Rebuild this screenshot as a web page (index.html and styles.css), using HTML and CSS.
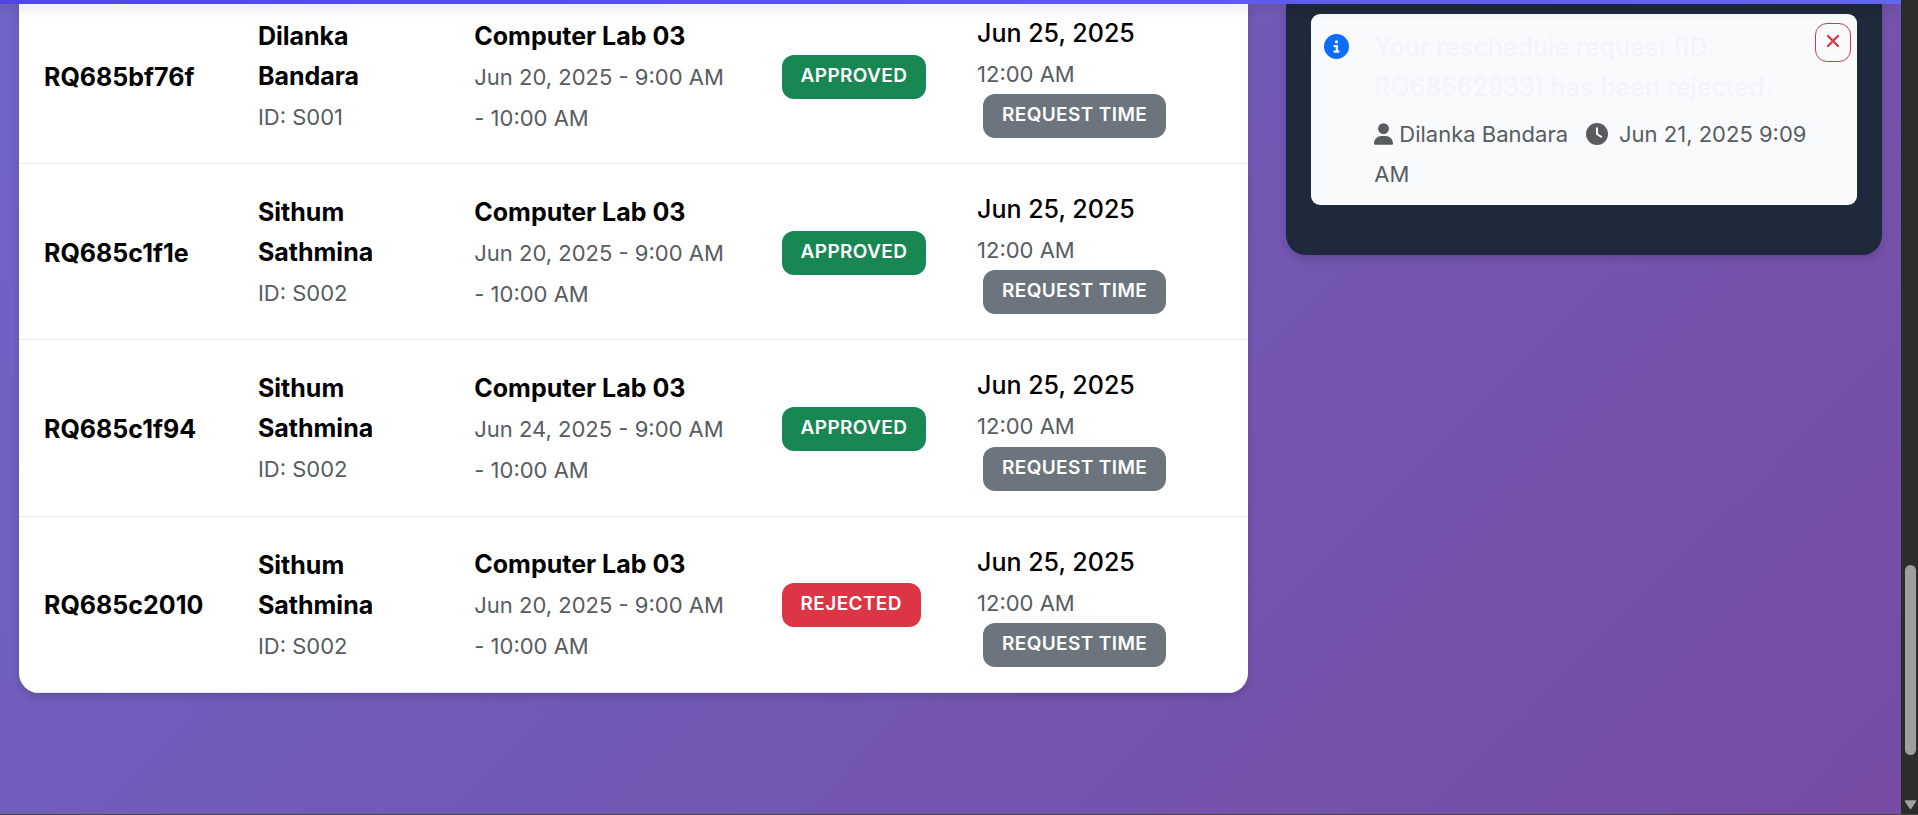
FILE: index.html
```
<!DOCTYPE html>
<html lang="en">
<head>
<meta charset="utf-8">
<meta name="viewport" content="width=device-width, initial-scale=1">
<title>Reschedule Requests</title>
<link rel="stylesheet" href="styles.css">
</head>
<body>
<div class="window">
  <div class="page">
    <header class="topbar"></header>
    <main class="columns">
      <section class="column">
        <div class="table-card">
          <table class="requests">
            <colgroup>
              <col class="col-id"><col class="col-person"><col class="col-lab"><col class="col-status"><col class="col-date">
            </colgroup>
            <tbody>
              <tr>
                <td><strong>RQ685bf76f</strong></td>
                <td><strong>Dilanka Bandara</strong><br><small>ID: S001</small></td>
                <td><strong>Computer Lab 03</strong><br><small>Jun 20, 2025 - 9:00 AM - 10:00 AM</small></td>
                <td><span class="badge approved">Approved</span></td>
                <td><span class="date">Jun 25, 2025</span><br><small>12:00 AM</small> <span class="badge neutral">Request Time</span></td>
              </tr>
              <tr>
                <td><strong>RQ685c1f1e</strong></td>
                <td><strong>Sithum Sathmina</strong><br><small>ID: S002</small></td>
                <td><strong>Computer Lab 03</strong><br><small>Jun 20, 2025 - 9:00 AM - 10:00 AM</small></td>
                <td><span class="badge approved">Approved</span></td>
                <td><span class="date">Jun 25, 2025</span><br><small>12:00 AM</small> <span class="badge neutral">Request Time</span></td>
              </tr>
              <tr>
                <td><strong>RQ685c1f94</strong></td>
                <td><strong>Sithum Sathmina</strong><br><small>ID: S002</small></td>
                <td><strong>Computer Lab 03</strong><br><small>Jun 24, 2025 - 9:00 AM - 10:00 AM</small></td>
                <td><span class="badge approved">Approved</span></td>
                <td><span class="date">Jun 25, 2025</span><br><small>12:00 AM</small> <span class="badge neutral">Request Time</span></td>
              </tr>
              <tr>
                <td><strong>RQ685c2010</strong></td>
                <td><strong>Sithum Sathmina</strong><br><small>ID: S002</small></td>
                <td><strong>Computer Lab 03</strong><br><small>Jun 20, 2025 - 9:00 AM - 10:00 AM</small></td>
                <td><span class="badge rejected">Rejected</span></td>
                <td><span class="date">Jun 25, 2025</span><br><small>12:00 AM</small> <span class="badge neutral">Request Time</span></td>
              </tr>
            </tbody>
          </table>
        </div>
      </section>
      <aside class="column">
        <div class="panel">
          <article class="notice">
            <svg class="notice-icon" viewBox="0 0 512 512" aria-hidden="true"><path fill="currentColor" d="M256 512A256 256 0 1 0 256 0a256 256 0 1 0 0 512zM216 336h24V272H216c-13.300 0-24-10.700-24-24s10.700-24 24-24h48c13.300 0 24 10.700 24 24v88h8c13.300 0 24 10.700 24 24s-10.700 24-24 24H216c-13.300 0-24-10.700-24-24s10.700-24 24-24zm40-208a32 32 0 1 1 0 64 32 32 0 1 1 0-64z"/></svg>
            <div class="notice-body">
              <p class="notice-text">Your reschedule request (ID: RQ68562933) has been rejected.</p>
              <p class="notice-meta"><svg class="user-icon" viewBox="0 0 448 512" aria-hidden="true"><path fill="currentColor" d="M224 256A128 128 0 1 0 224 0a128 128 0 1 0 0 256zm-45.700 48C79.800 304 0 383.800 0 482.300C0 498.700 13.300 512 29.700 512H418.300c16.400 0 29.700-13.300 29.700-29.700C448 383.800 368.200 304 269.700 304H178.300z"/></svg>Dilanka Bandara<svg class="clock-icon" viewBox="0 0 512 512" aria-hidden="true"><path fill="currentColor" d="M256 0a256 256 0 1 1 0 512A256 256 0 1 1 256 0zM232 120V256c0 8 4 15.500 10.700 20l96 64c11 7.400 25.900 4.400 33.300-6.700s4.400-25.900-6.700-33.300L280 243.200V120c0-13.300-10.700-24-24-24s-24 10.700-24 24z"/></svg>Jun 21, 2025 9:09 AM</p>
            </div>
            <button class="dismiss" type="button" aria-label="Dismiss notification"><svg class="dismiss-icon" viewBox="0 0 14 14" aria-hidden="true"><path d="M2 2l10 10M12 2L2 12" fill="none" stroke="currentColor" stroke-width="2.300" stroke-linecap="round"/></svg></button>
          </article>
        </div>
      </aside>
    </main>
  </div>
  <div class="scrollbar" aria-hidden="true">
    <div class="thumb"></div>
    <svg class="scroll-arrow" viewBox="0 0 13 10"><path d="M1.500 1h10L6.500 8.500z" fill="#9f9f9f" stroke="#9f9f9f" stroke-width="1.500" stroke-linejoin="round"/></svg>
  </div>
</div>
</body>
</html>
```
FILE: styles.css
```
* {
  box-sizing: border-box;
}

body {
  margin: 0;
  font-family: Inter, "Liberation Sans", sans-serif;
  font-size: 25px;
  line-height: 40px;
  color: #000;
}

.window {
  display: flex;
  height: 100vh;
  overflow: hidden;
  border-bottom: 1px solid #45484c;
}

.page {
  flex: 1;
  min-width: 0;
  background: linear-gradient(135deg, #6f65c6, #764ca4);
}

.topbar {
  position: relative;
  height: 4px;
  background: linear-gradient(90deg, #4f46e5, #6366f1);
  box-shadow: 0 4px 12px rgba(0, 0, 0, 0.2);
}

.columns {
  display: grid;
  grid-template-columns: 2fr 1fr;
  align-items: start;
}

.column {
  min-width: 0;
  padding: 0 19px;
}

.table-card {
  overflow: hidden;
  background: #fff;
  border-radius: 0 0 20px 20px;
  box-shadow: 0 4px 8px rgba(0, 0, 0, 0.15);
}

.requests {
  width: 100%;
  table-layout: fixed;
  border-collapse: separate;
  border-spacing: 0;
}

.col-id { width: 17.4%; }
.col-person { width: 17.6%; }
.col-lab { width: 25%; }
.col-status { width: 15.9%; }
.col-date { width: 24.1%; }

.requests td {
  padding: 27px 25px 25px;
  border-bottom: 1px solid #e2e8f0;
  vertical-align: middle;
}

.requests td:last-child {
  padding-top: 25px;
}

.requests tr:first-child td {
  padding-top: 11px;
}

.requests tr:first-child td:last-child {
  padding-top: 9px;
}

.requests strong {
  font-weight: 700;
}

.requests small {
  font-size: 22px;
  color: #595c5f;
}

.date {
  font-weight: 500;
}

.badge {
  display: inline-block;
  padding: 7px 19px 9px;
  border-radius: 12px;
  font-size: 19px;
  font-weight: 600;
  line-height: 28px;
  letter-spacing: 0.02em;
  text-transform: uppercase;
  white-space: nowrap;
  vertical-align: middle;
  color: #fff;
}

.approved { background: #198754; }
.rejected { background: #dc3545; }

.neutral {
  margin-left: 6px;
  background: #6c757d;
}

.panel {
  padding: 10px 25px 50px;
  background: #1e293b;
  border-radius: 0 0 20px 20px;
  box-shadow: 0 4px 8px rgba(0, 0, 0, 0.15);
}

.notice {
  display: flex;
  align-items: flex-start;
  padding: 9px 6px 11px 13px;
  background: #f8fafc;
  border-radius: 9px;
}

.notice-icon {
  flex: none;
  width: 25px;
  height: 25px;
  margin: 11px 25px 0 0;
  color: #0d6efd;
}

.notice-body {
  flex: 1;
  min-width: 0;
  padding-top: 4px;
}

.notice-text,
.notice-meta {
  margin: 0;
}

.notice-text {
  margin-bottom: 7px;
  font-weight: 500;
  color: #f1f5f9;
}

.notice-meta {
  font-size: 22px;
  color: #595c5f;
}

.user-icon {
  width: 19px;
  height: 22px;
  margin-right: 6px;
  vertical-align: -3px;
}

.clock-icon {
  width: 22px;
  height: 22px;
  margin: 0 11px 0 18px;
  vertical-align: -3px;
}

.dismiss {
  display: flex;
  flex: none;
  justify-content: center;
  width: 36px;
  height: 39px;
  padding: 10px 0 0;
  border: 1px solid #dc3545;
  border-radius: 12px;
  background: transparent;
  color: #dc3545;
}

.dismiss-icon {
  width: 14px;
  height: 14px;
}

.scrollbar {
  display: flex;
  flex-direction: column;
  align-items: center;
  width: 17px;
  padding: 0 0 4px 2px;
  background: #2c2c2c;
}

.thumb {
  width: 11px;
  height: 23.500%;
  margin-top: 565px;
  border-radius: 6px;
  background: #9f9f9f;
}

.scroll-arrow {
  width: 13px;
  height: 10px;
  margin-top: auto;
}
```
